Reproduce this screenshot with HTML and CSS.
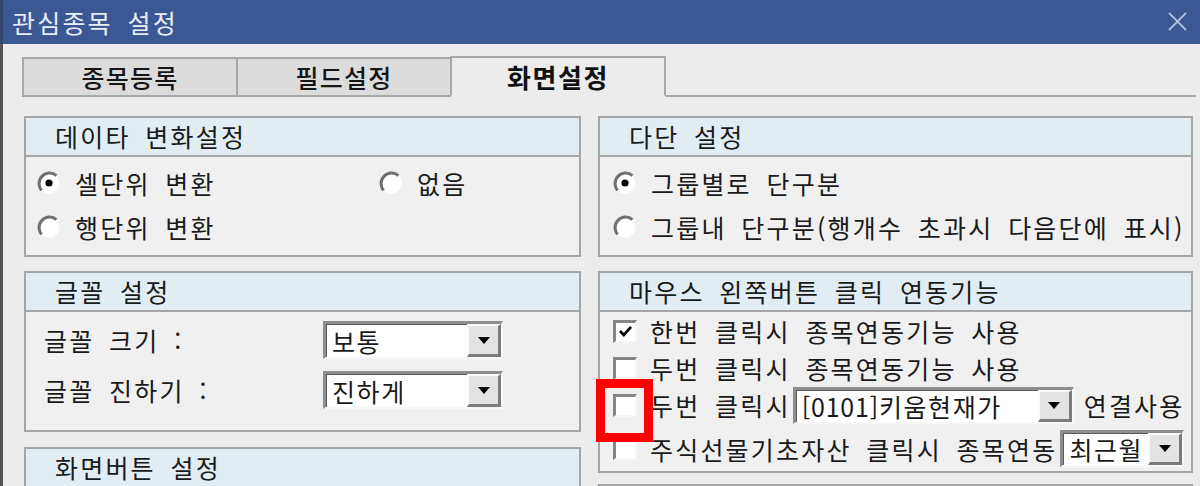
FILE: index.html
```html
<!DOCTYPE html>
<html lang="ko">
<head>
<meta charset="utf-8">
<title>관심종목 설정</title>
<link rel="stylesheet" href="styles.css">
</head>
<body>
<div class="window">
  <div class="titlebar">
    <span class="title">관심종목 설정</span>
    <svg class="close" viewBox="0 0 20 20"><path d="M1 1 L19 19 M19 1 L1 19" stroke="#b3c2df" stroke-width="2" fill="none"/></svg>
  </div>
  <div class="client">
    <div class="tabs">
      <div class="tab">종목등록</div>
      <div class="tab">필드설정</div>
      <div class="tab active">화면설정</div>
      <div class="tab-fill"></div>
    </div>
    <div class="columns">
      <div class="col col-left">
        <div class="panel panel-data">
          <div class="panel-head">데이타 변화설정</div>
          <div class="panel-body radio-grid">
            <label class="opt"><svg class="radio" viewBox="0 0 24 24"><circle cx="12" cy="12" r="10.5" fill="#fff"/><path d="M4.6 19.4 A10.5 10.5 0 0 1 19.4 4.6" stroke="#707070" stroke-width="3" fill="none"/><circle cx="12" cy="12" r="3.6" fill="#000"/></svg><span>셀단위 변환</span></label>
            <label class="opt"><svg class="radio" viewBox="0 0 24 24"><circle cx="12" cy="12" r="10.5" fill="#fff"/><path d="M4.6 19.4 A10.5 10.5 0 0 1 19.4 4.6" stroke="#707070" stroke-width="3" fill="none"/></svg><span>없음</span></label>
            <label class="opt"><svg class="radio" viewBox="0 0 24 24"><circle cx="12" cy="12" r="10.5" fill="#fff"/><path d="M4.6 19.4 A10.5 10.5 0 0 1 19.4 4.6" stroke="#707070" stroke-width="3" fill="none"/></svg><span>행단위 변환</span></label>
          </div>
        </div>
        <div class="panel panel-font">
          <div class="panel-head">글꼴 설정</div>
          <div class="panel-body font-grid">
            <span class="lbl">글꼴 크기 :</span>
            <div class="combo combo-font"><span class="combo-text">보통</span><span class="combo-btn"><i class="tri"></i></span></div>
            <span class="lbl">글꼴 진하기 :</span>
            <div class="combo combo-font"><span class="combo-text">진하게</span><span class="combo-btn"><i class="tri"></i></span></div>
          </div>
        </div>
        <div class="panel panel-btn">
          <div class="panel-head">화면버튼 설정</div>
          <div class="panel-body"></div>
        </div>
      </div>
      <div class="col col-right">
        <div class="panel panel-data">
          <div class="panel-head">다단 설정</div>
          <div class="panel-body radio-list">
            <label class="opt"><svg class="radio" viewBox="0 0 24 24"><circle cx="12" cy="12" r="10.5" fill="#fff"/><path d="M4.6 19.4 A10.5 10.5 0 0 1 19.4 4.6" stroke="#707070" stroke-width="3" fill="none"/><circle cx="12" cy="12" r="3.6" fill="#000"/></svg><span>그룹별로 단구분</span></label>
            <label class="opt"><svg class="radio" viewBox="0 0 24 24"><circle cx="12" cy="12" r="10.5" fill="#fff"/><path d="M4.6 19.4 A10.5 10.5 0 0 1 19.4 4.6" stroke="#707070" stroke-width="3" fill="none"/></svg><span>그룹내 단구분(행개수 초과시 다음단에 표시)</span></label>
          </div>
        </div>
        <div class="panel panel-mouse">
          <div class="panel-head">마우스 왼쪽버튼 클릭 연동기능</div>
          <div class="panel-body mouse-body">
            <div class="mrow r1"><span class="chk"><svg viewBox="0 0 20 20"><path d="M3.5 9.5 L8 14 L16.5 4.5" stroke="#000" stroke-width="3.2" fill="none"/></svg></span><span>한번 클릭시 종목연동기능 사용</span></div>
            <div class="mrow r2"><span class="chk"></span><span>두번 클릭시 종목연동기능 사용</span></div>
            <div class="mrow r3"><span class="chk"></span><span>두번 클릭시</span><div class="combo combo-link"><span class="combo-text"><span class="ascii">[0101]</span>키움현재가</span><span class="combo-btn"><i class="tri"></i></span></div><span class="after">연결사용</span></div>
            <div class="mrow r4"><span class="chk"></span><span>주식선물기초자산 클릭시 종목연동</span><div class="combo combo-month"><span class="combo-text">최근월</span><span class="combo-btn"><i class="tri"></i></span></div></div>
          </div>
        </div>
        <div class="panel panel-next">
          <div class="panel-head"></div>
        </div>
      </div>
    </div>
  </div>
  <div class="highlight"></div>
</div>
</body>
</html>
```

FILE: styles.css
```css
html, body {
  margin: 0;
  padding: 0;
  background: #ececec;
}
.window {
  position: relative;
  width: 1200px;
  height: 486px;
  overflow: hidden;
  font-family: "Noto Sans CJK KR", "Noto Sans", sans-serif;
  font-size: 25px;
  letter-spacing: 2.2px;
  word-spacing: 5.5px;
  color: #1a1a1a;
}
.titlebar {
  height: 44px;
  background: #3b5895;
  display: flex;
  align-items: center;
  justify-content: space-between;
  padding: 0 13px 0 12px;
  box-sizing: border-box;
  border-left: 3px solid #34466e;
}
.title {
  color: #e9eef7;
  line-height: 44px;
  margin-top: -1px;
  margin-left: -3px;
}
.close {
  width: 19px;
  height: 19px;
  margin-top: -1px;
}
.client {
  height: 442px;
  background: #ececec;
  border-left: 3px solid #545454;
  box-sizing: border-box;
  padding-top: 12px;
}
.tabs {
  display: flex;
  align-items: flex-end;
  height: 41px;
  padding-left: 19px;
}
.tab {
  box-sizing: border-box;
  width: 216px;
  height: 40px;
  margin-right: -2px;
  border: 2px solid #a8a8a8;
  background: #dcdcdc;
  display: flex;
  align-items: center;
  justify-content: center;
  font-size: 25px;
  letter-spacing: 1.2px;
  font-weight: 500;
  color: #161616;
}
.tab.active {
  height: 41px;
  background: #ececec;
  border-bottom-color: transparent;
  font-weight: 700;
  font-size: 26px;
  letter-spacing: 1.6px;
  color: #111;
  position: relative;
  z-index: 1;
}
.tab-fill {
  flex: 1;
  height: 2px;
  background: #a8a8a8;
  margin-right: 4px;
}
.columns {
  display: flex;
  gap: 17px;
  padding-left: 21px;
  margin-top: 19px;
}
.col {
  display: flex;
  flex-direction: column;
}
.col-left { width: 557px; }
.col-right { width: 595px; }
.col-left .panel-font { margin-top: 14px; }
.col-left .panel-btn { margin-top: 15px; height: 80px; }
.col-right .panel-mouse { margin-top: 14px; }
.col-right .panel-next { margin-top: 11px; height: 60px; }
.panel {
  box-sizing: border-box;
  border: 2px solid #a5a5a5;
  background: #f0f0f0;
}
.panel-head {
  height: 37px;
  line-height: 37px;
  background: #e2edf3;
  border-bottom: 2px solid #a5a5a5;
  padding-left: 29px;
}
.panel-data { height: 141px; }
.panel-font { height: 161px; }
.panel-mouse { height: 202px; }

.opt {
  display: flex;
  align-items: center;
  height: 44px;
  white-space: nowrap;
}
.radio {
  width: 24px;
  height: 24px;
  flex: none;
  margin-right: 14px;
}
.radio-grid {
  display: grid;
  grid-template-columns: 342px 1fr;
  padding: 4px 0 0 11px;
}
.radio-list {
  padding: 4px 0 0 13px;
}

.font-grid {
  display: grid;
  grid-template-columns: 279px 180px;
  row-gap: 12px;
  padding: 9px 0 0 18px;
  align-items: center;
}
.lbl {
  line-height: 38px;
}
.combo {
  box-sizing: border-box;
  height: 38px;
  display: flex;
  align-items: stretch;
  background: #fff;
  border-style: solid;
  border-width: 3px 2px 2px 3px;
  border-color: #8e8e8e #f7f7f7 #f7f7f7 #8e8e8e;
  box-shadow: inset 1px 1px 0 #5c5c5c;
}
.combo-text {
  flex: 1;
  padding-left: 6px;
  display: flex;
  align-items: center;
  white-space: nowrap;
  letter-spacing: 1.6px;
}
.ascii {
  letter-spacing: 0.8px;
}
.combo-btn {
  box-sizing: border-box;
  width: 34px;
  background: #e3e3e3;
  border-style: solid;
  border-width: 2px 3px 3px 2px;
  border-color: #fafafa #7b7b7b #7b7b7b #fafafa;
  display: flex;
  align-items: center;
  justify-content: center;
}
.tri {
  width: 0;
  height: 0;
  border-left: 6px solid transparent;
  border-right: 6px solid transparent;
  border-top: 7px solid #000;
}
.combo-font { width: 180px; }
.combo-link { width: 281px; height: 37px; margin-left: 2px; flex: none; }
.combo-month { width: 124px; height: 37px; margin-left: 3px; flex: none; }

.mouse-body {
  padding-left: 13px;
}
.mrow {
  display: flex;
  align-items: center;
  white-space: nowrap;
}
.r1 { height: 38px; }
.r2 { height: 36px; }
.r3 { height: 38px; }
.r4 { height: 37px; margin-top: 6px; }
.chk {
  box-sizing: border-box;
  width: 24px;
  height: 23px;
  flex: none;
  margin-right: 13px;
  background: #fff;
  border-style: solid;
  border-width: 3px 2px 2px 3px;
  border-color: #858585 #f6f6f6 #f6f6f6 #858585;
  display: flex;
  align-items: center;
  justify-content: center;
}
.chk svg {
  width: 17px;
  height: 17px;
}
.after {
  margin-left: 10px;
}
.highlight {
  position: absolute;
  left: 596px;
  top: 379px;
  width: 57px;
  height: 63px;
  box-sizing: border-box;
  border: 9px solid #ff0000;
}
```
